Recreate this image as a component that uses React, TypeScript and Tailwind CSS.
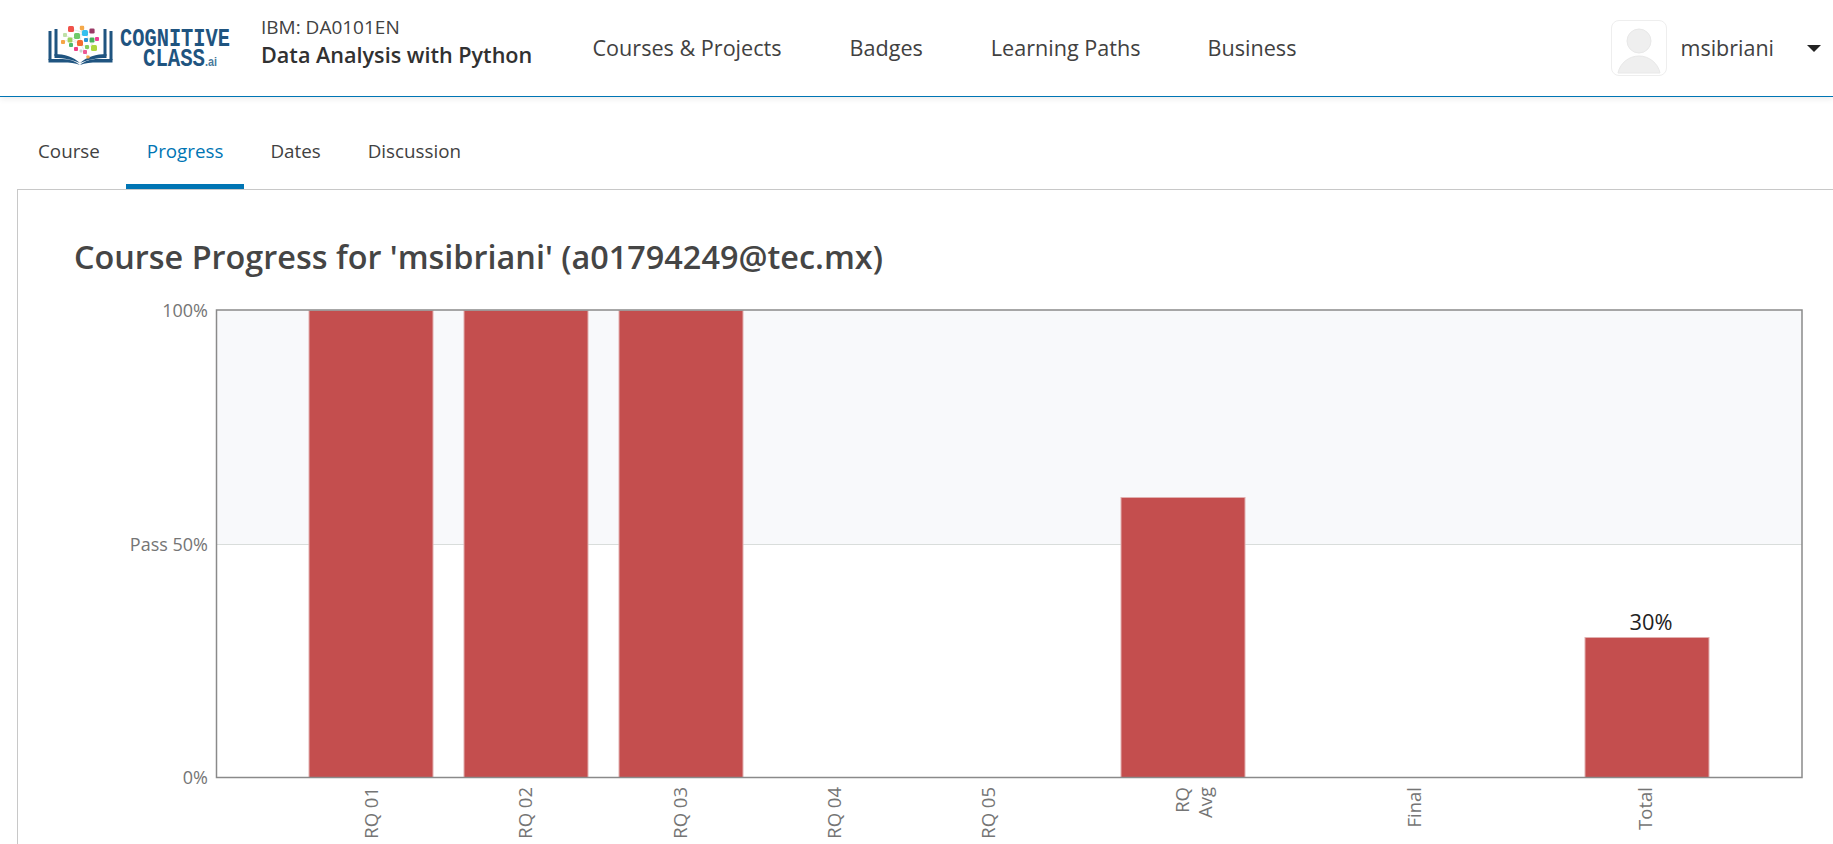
import React from "react";

const font = "font-['Open_Sans',sans-serif]";

const navLinks = [
  { label: "Courses & Projects", className: "ml-0" },
  { label: "Badges", className: "ml-[68px]" },
  { label: "Learning Paths", className: "ml-[68px]" },
  { label: "Business", className: "ml-[67px]" },
];

const tabs = ["Course", "Progress", "Dates", "Discussion"];

const bars = [
  { x: 309, y: 310 },
  { x: 464, y: 310 },
  { x: 619, y: 310 },
  { x: 1121, y: 497 },
  { x: 1585, y: 637 },
];

const ticks = [
  { x: 372, lines: ["RQ 01"] },
  { x: 526, lines: ["RQ 02"] },
  { x: 681, lines: ["RQ 03"] },
  { x: 835, lines: ["RQ 04"] },
  { x: 989, lines: ["RQ 05"] },
  { x: 1183, lines: ["RQ", "Avg"] },
  { x: 1415, lines: ["Final"] },
  { x: 1646, lines: ["Total"] },
];

// brain nodes on the logo, in page coordinates
const dots = [
  [71, 29, 3, "#f0524a"], [82, 28, 2.2, "#f5a94a"], [92, 31, 2.6, "#9a3a66"], [65, 35, 2, "#bfe0a8"],
  [70, 40, 2.4, "#9bd35c"], [77, 36, 3, "#6fca6a"], [85, 33, 3, "#35bfee"], [63, 42, 2, "#f5a545"],
  [86, 40, 2, "#2b95d8"], [97, 39, 2, "#ee3f94"], [92, 40, 2.4, "#48b35c"], [80, 43, 3, "#f46c30"],
  [94, 48, 3, "#aed63f"], [71, 45, 2, "#4cba6c"], [76, 49, 2, "#ee3f84"], [87, 47, 2, "#84cc5c"],
  [85, 52, 2, "#ee5a94"], [81, 51, 1.4, "#c9d6cf"], [88, 57, 1.6, "#f5a94a"],
] as const;

function Logo() {
  return (
    <svg width="190" height="48" viewBox="46 24 190 48" className="block">
      <g fill="#1f5480" className="blur-[0.3px]">
        <rect x="48.500" y="31" width="3" height="29" />
        <rect x="54.500" y="29" width="3" height="27" />
        <rect x="109.500" y="31" width="3" height="29" />
        <rect x="103.500" y="29" width="3" height="27" />
        <path d="M48.500 59h14c7 0 13 2 17.500 6-5-2-10-2.500-17-2.500H48.500z" />
        <path d="M54.500 54c10 0 19 3 25.500 9-7-3-15-5-25.500-5z" />
        <path d="M112.500 59H98c-7 0-13.500 2-18 6 5-2 11-2.500 18-2.500h14.500z" />
        <path d="M106.500 54c-10 0-20 3-26.500 9 7-3 16-5 26.500-5z" />
      </g>
      <path d="M71 29L85 33L94 48M65 35L80 43L76 49M63 42L77 36L92 31M70 40L87 47M82 28L80 43L88 57M97 39L85 52" stroke="#d5ded8" strokeWidth="0.6" fill="none" />
      {dots.map(([cx, cy, r, fill], i) => (
        <rect key={i} x={cx - r} y={cy - r} width={r * 2} height={r * 2} rx={r * 0.5} fill={fill} />
      ))}
      <text x="120" y="46" textLength="110" lengthAdjust="spacingAndGlyphs" fontFamily="'Liberation Mono', monospace" fontWeight="700" fontSize="25" fill="#1f5480">COGNITIVE</text>
      <text x="143" y="66" textLength="62" lengthAdjust="spacingAndGlyphs" fontFamily="'Liberation Mono', monospace" fontWeight="700" fontSize="25" fill="#1f5480">CLASS</text>
      <text x="205" y="66" textLength="12" lengthAdjust="spacingAndGlyphs" fontFamily="'Liberation Sans', sans-serif" fontWeight="700" fontSize="12" fill="#4a7a9c">.ai</text>
    </svg>
  );
}

function Avatar() {
  return (
    <div className="w-[56px] h-[56px] rounded-lg border border-[#eeeeee] bg-white">
      <svg width="54" height="54" viewBox="0 0 54 54" className="block">
        <circle cx="27" cy="20" r="12" fill="#efefef" stroke="#e8e8e8" />
        <path d="M6 52c2-10 11-17 21-17s19 7 21 17z" fill="#efefef" stroke="#e8e8e8" />
      </svg>
    </div>
  );
}

function Chart() {
  return (
    <svg width="1815" height="548" viewBox="18 296 1815 548" className="block" fontFamily="'Open Sans', sans-serif">
      <rect x="216" y="310" width="1586" height="234" fill="#f8f9fb" />
      <line x1="216" x2="1802" y1="544.5" y2="544.5" stroke="#d9dddb" />
      {bars.map((b) => (
        <rect key={b.x} x={b.x} y={b.y + 0.5} width="124" height={777 - b.y} fill="#c44e4e" stroke="#e2b0b0" />
      ))}
      <rect x="216.5" y="310" width="1585.5" height="467.5" fill="none" stroke="#8a8a8a" strokeWidth="1.5" />
      <text x="208" y="317" textAnchor="end" fontSize="18" fill="#757575">100%</text>
      <text x="208" y="551" textAnchor="end" fontSize="18" fill="#757575">Pass 50%</text>
      <text x="208" y="784" textAnchor="end" fontSize="18" fill="#757575">0%</text>
      <text x="1651" y="630" textAnchor="middle" fontSize="21.8" fill="#222222">30%</text>
      {ticks.map((t) => (
        <text key={t.x} transform={`translate(${t.x} 787) rotate(-90)`} textAnchor="end" fontSize="18.5" fill="#757575">
          {t.lines.map((line, i) => (
            <tspan key={line} x="0" y={6 + i * 23}>{line}</tspan>
          ))}
        </text>
      ))}
    </svg>
  );
}

export default function App() {
  return (
    <div className={`h-[844px] w-[1833px] overflow-hidden bg-white text-[#333333] ${font}`}>
      <header className="relative h-[97px] border-b border-[#0075b4] shadow-[0_2px_6px_rgba(0,0,0,0.08)] flex items-center pl-[46px] pr-[12px]">
        <Logo />
        <div className="ml-[25px] w-[331.500px] -mt-[15px]">
          <div className="text-[19px] leading-[28px] text-[#414141]">IBM: DA0101EN</div>
          <div className="text-[21.6px] leading-[28px] font-semibold text-[#313131]">Data Analysis with Python</div>
        </div>
        <nav className="flex text-[21.6px] text-[#414141]">
          {navLinks.map((n) => (
            <a key={n.label} className={n.className}>{n.label}</a>
          ))}
        </nav>
        <div className="ml-auto flex items-center">
          <Avatar />
          <span className="ml-[13px] text-[21.5px] text-[#414141]">msibriani</span>
          <span className="ml-[33px] w-0 h-0 border-x-[7px] border-x-transparent border-t-[7px] border-t-[#222222]"></span>
        </div>
      </header>
      <div className="flex pl-[17px] h-[92px] text-[18.8px] text-[#414141]">
        {tabs.map((t) => (
          <div
            key={t}
            className={`px-[21px] mr-[5px] flex items-center border-b-[5px] pt-[21px] ${
              t === "Progress" ? "border-[#0075b4] text-[#0075b4]" : "border-transparent"
            }`}
          >
            {t}
          </div>
        ))}
      </div>
      <div className="ml-[17px] border-l border-t border-[#c8c8c8]">
        <h1 className="h-[106px] pl-[56px] pt-[46px] text-[32.4px] leading-[40px] font-semibold text-[#454545]">
          Course Progress for 'msibriani' (a01794249@tec.mx)
        </h1>
        <Chart />
      </div>
    </div>
  );
}
